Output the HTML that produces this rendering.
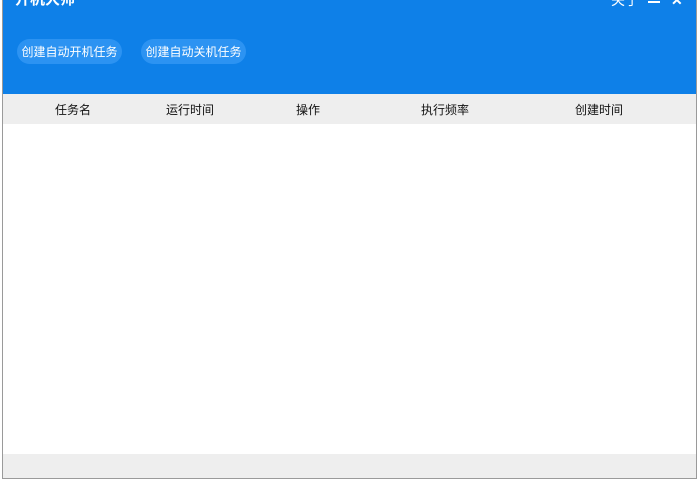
<!DOCTYPE html>
<html><head><meta charset="utf-8"><style>
body{margin:0;width:700px;height:481px;background:#fff;overflow:hidden;font-family:"Liberation Sans","Noto Sans CJK SC",sans-serif;position:relative}
.win{position:absolute;left:2px;top:0;width:695px;height:479px;border:1px solid #9a9a9a;border-top:none;background:#fff;box-sizing:border-box}
.top{position:absolute;left:0;top:0;width:100%;height:94px;background:#0e80e8}
.title{position:absolute;left:12px;top:-9px;color:#fff;font-weight:bold;font-size:15px;line-height:18px}
.tr{position:absolute;top:-9px;color:#fff;font-size:14px;line-height:18px}
.btn{position:absolute;top:39px;height:25px;width:105px;border-radius:13px;background:#2c93f2;color:#fff;font-size:12px;line-height:27px;text-align:center}
.hdr{position:absolute;left:0;top:94px;width:100%;height:30px;background:#eeeeee;font-size:12px;color:#111}
.hdr span{position:absolute;top:1px;line-height:30px;transform:translateX(-50%)}
.foot{position:absolute;left:0;top:454px;width:100%;height:24px;background:#eeeeee}
</style></head><body>
<div class="win">
<div class="top">
<div class="title">开机大师</div>
<div class="tr" style="left:608px">关于</div>
<div style="position:absolute;left:645px;top:1px;width:12px;height:2px;background:#fff"></div>
<div class="tr" style="left:668px;font-weight:bold">✕</div>
<div class="btn" style="left:14px">创建自动开机任务</div>
<div class="btn" style="left:138px">创建自动关机任务</div>
</div>
<div class="hdr">
<span style="left:70px">任务名</span>
<span style="left:187px">运行时间</span>
<span style="left:305px">操作</span>
<span style="left:442px">执行频率</span>
<span style="left:596px">创建时间</span>
</div>
<div class="foot"></div>
</div>
</body></html>
